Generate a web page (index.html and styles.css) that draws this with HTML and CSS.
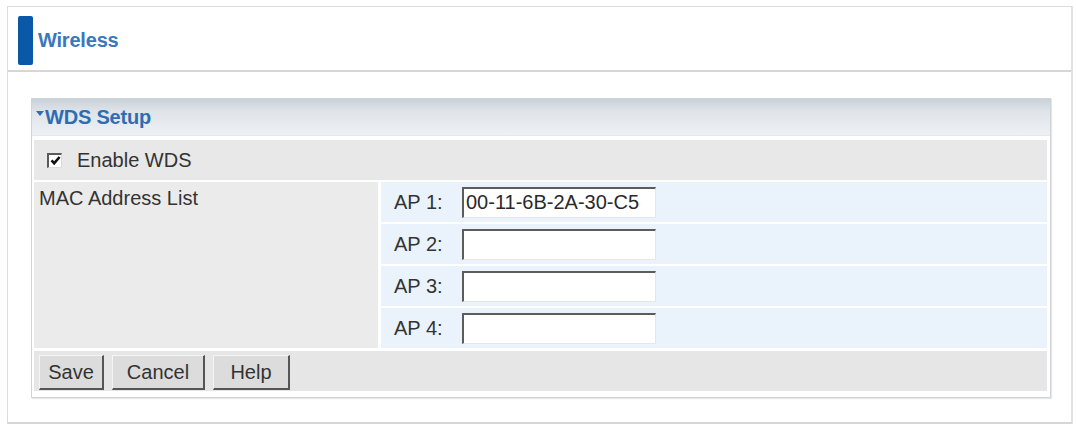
FILE: index.html
```html
<!DOCTYPE html>
<html>
<head>
<meta charset="utf-8">
<link rel="stylesheet" href="styles.css">
</head>
<body>
<div class="frame">
  <div class="page-head">
    <span class="head-bar"></span>
    <span class="head-title">Wireless</span>
  </div>
  <div class="panel">
    <div class="panel-head"><span class="tri"></span>WDS Setup</div>
    <div class="panel-body">
      <div class="row-enable">
        <span class="check"><svg width="11" height="11" viewBox="0 0 11 11"><path d="M1.5 5.3 L4.2 8.2 L9.6 2" fill="none" stroke="#111" stroke-width="2.6"/></svg></span>
        <span class="enable-text">Enable WDS</span>
      </div>
      <div class="mac-grid">
        <div class="mac-label">MAC Address List</div>
        <div class="ap-list">
          <div class="ap-row"><span class="ap-label">AP 1:</span><span class="ap-input">00-11-6B-2A-30-C5</span></div>
          <div class="ap-row"><span class="ap-label">AP 2:</span><span class="ap-input"></span></div>
          <div class="ap-row"><span class="ap-label">AP 3:</span><span class="ap-input"></span></div>
          <div class="ap-row"><span class="ap-label">AP 4:</span><span class="ap-input"></span></div>
        </div>
      </div>
      <div class="row-buttons">
        <span class="btn btn-save">Save</span>
        <span class="btn btn-cancel">Cancel</span>
        <span class="btn btn-help">Help</span>
      </div>
    </div>
  </div>
</div>
</body>
</html>
```
FILE: styles.css
```css
html, body {
  margin: 0;
  padding: 0;
  background: #ffffff;
}
body {
  font-family: "Liberation Sans", Arial, sans-serif;
  font-size: 20px;
  color: #333333;
}
.frame {
  box-sizing: border-box;
  width: 1066px;
  height: 418px;
  margin: 6px 0 0 7px;
  border: 1px solid #dcdcdc;
  border-bottom: 2px solid #d6d6d6;
  border-right: 2px solid #e2e2e2;
}
.page-head {
  box-sizing: border-box;
  height: 65px;
  border-bottom: 2px solid #d6d6d6;
  display: flex;
  align-items: flex-start;
  padding-left: 10px;
}
.head-bar {
  display: block;
  width: 15px;
  height: 49px;
  background: #0a58a8;
  border-radius: 2px;
  margin-top: 9px;
}
.head-title {
  font-weight: bold;
  color: #3a78bb;
  font-size: 20px;
  margin-left: 5px;
  letter-spacing: -0.2px;
  margin-top: 22px;
  line-height: 23px;
}
.panel {
  box-sizing: border-box;
  width: 1020px;
  height: 300px;
  margin: 26px 0 0 23px;
  border: 1px solid #d0d4d8;
  box-shadow: 1px 1px 1px #e4e6e8;
  background: #ffffff;
}
.panel-head {
  box-sizing: border-box;
  height: 37px;
  background: linear-gradient(#c9d1d9 0%, #dfe4e9 35%, #eef1f4 100%);
  border-bottom: 1px solid #e4e8ec;
  display: flex;
  align-items: center;
  padding-left: 4px;
  font-weight: bold;
  color: #2f6db3;
  font-size: 20px;
  letter-spacing: -0.2px;
}
.tri {
  width: 0;
  height: 0;
  border-left: 4px solid transparent;
  border-right: 4px solid transparent;
  border-top: 5px solid #2f6db3;
  margin-right: 1px;
  margin-top: -7px;
}
.panel-body {
  padding: 4px 3px 0 2px;
  display: flex;
  flex-direction: column;
  gap: 2px;
}
.row-enable {
  height: 40px;
  background: #e8e8e8;
  display: flex;
  align-items: center;
  padding-left: 13px;
}
.check {
  box-sizing: border-box;
  width: 15px;
  height: 15px;
  background: #ffffff;
  border-top: 2px solid #5a5a5a;
  border-left: 2px solid #5a5a5a;
  border-right: 1px solid #dcdcdc;
  border-bottom: 1px solid #dcdcdc;
  display: flex;
  align-items: center;
  justify-content: center;
}
.check svg {
  display: block;
}
.enable-text {
  margin-left: 15px;
}
.mac-grid {
  display: grid;
  grid-template-columns: 344px 1fr;
  gap: 3px;
}
.mac-label {
  background: #ebebeb;
  padding: 5px 0 0 5px;
  line-height: 22px;
}
.ap-list {
  display: flex;
  flex-direction: column;
  gap: 2px;
}
.ap-row {
  height: 40px;
  background: #eaf3fc;
  display: flex;
  align-items: center;
  padding-left: 13px;
}
.ap-label {
  width: 68px;
}
.ap-input {
  box-sizing: border-box;
  width: 194px;
  height: 31px;
  background: #ffffff;
  border-top: 2px solid #5c5c5c;
  border-left: 2px solid #5c5c5c;
  border-right: 1px solid #e6e6e6;
  border-bottom: 1px solid #e6e6e6;
  padding-left: 2px;
  line-height: 27px;
  color: #2a2a2a;
}
.row-buttons {
  height: 40px;
  margin-top: 1px;
  background: #e6e6e6;
  display: flex;
  align-items: center;
  padding-left: 5px;
  gap: 8px;
}
.btn {
  box-sizing: border-box;
  height: 35px;
  background: #dcdcdc;
  border-top: 1px solid #f4f4f4;
  border-left: 1px solid #f4f4f4;
  border-right: 2px solid #555555;
  border-bottom: 2px solid #555555;
  display: flex;
  align-items: center;
  justify-content: center;
  color: #333333;
  margin-top: 3px;
}
.btn-save { width: 65px; }
.btn-cancel { width: 93px; }
.btn-help { width: 77px; }
```
